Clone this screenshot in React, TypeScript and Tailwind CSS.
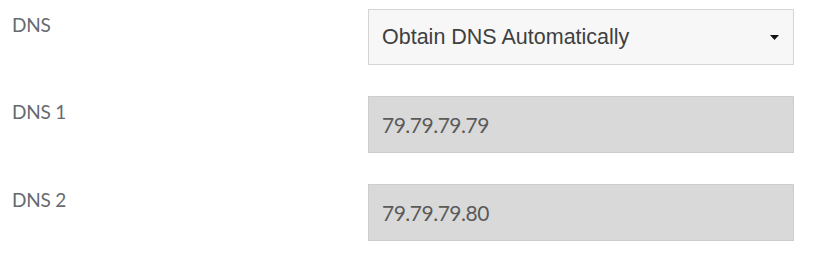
import React from "react";

function Row({ label, children }: { label: string; children: React.ReactNode }) {
  return (
    <div className="flex">
      <div className="w-[368px] shrink-0 pl-[12px] pt-[6px] text-[19px] leading-[19px] text-[#666a70] font-['Lato',sans-serif] tracking-[-0.2px]">
        {label}
      </div>
      {children}
    </div>
  );
}

export default function App() {
  return (
    <div className="w-[817px] h-[257px] bg-white pt-[9px] flex flex-col gap-[31px]">
      <Row label="DNS">
        <div className="w-[426px] h-[56px] border border-[#d4d4d4] bg-[#f7f7f7] flex items-center justify-between pl-[13px] pr-[14px]">
          <span className="text-[21.5px] text-[#404040] font-['Liberation_Sans',Arial,sans-serif]">
            Obtain DNS Automatically
          </span>
          <svg width="9" height="5" viewBox="0 0 9 5" className="mt-[1px]">
            <polygon points="0,0 9,0 4.5,5" fill="#111" />
          </svg>
        </div>
      </Row>
      <Row label="DNS 1">
        <div className="w-[426px] h-[57px] border border-[#cdcdcd] bg-[#d9d9d9] flex items-center pl-[13px]">
          <span className="text-[21px] text-[#5a5a5a] font-['Lato',sans-serif] tracking-[-0.5px]">79.79.79.79</span>
        </div>
      </Row>
      <Row label="DNS 2">
        <div className="w-[426px] h-[57px] border border-[#cdcdcd] bg-[#d9d9d9] flex items-center pl-[13px]">
          <span className="text-[21px] text-[#5a5a5a] font-['Lato',sans-serif] tracking-[-0.5px]">79.79.79.80</span>
        </div>
      </Row>
    </div>
  );
}
